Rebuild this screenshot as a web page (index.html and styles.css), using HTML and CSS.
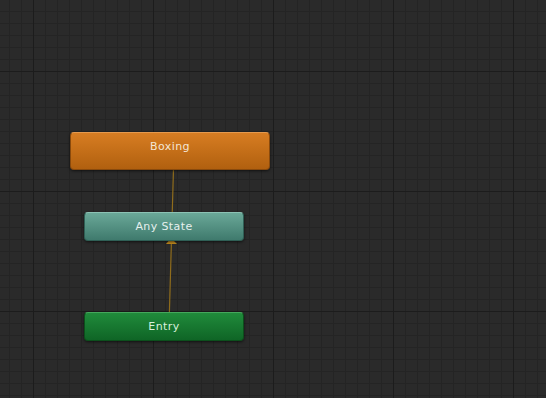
FILE: index.html
```html
<!DOCTYPE html>
<html lang="en">
<head>
  <meta charset="UTF-8" />
  <title>Animator</title>
  <link rel="stylesheet" href="styles.css">
</head>
<body>
  <div class="graph">
    <svg class="links" width="546" height="398">
      <line x1="169" y1="326" x2="174" y2="151" stroke="#8f6c1c" stroke-width="1.2" />
      <polygon points="171,238 166,244 177,244" fill="#c08a1e" />
    </svg>

    <div class="node state" style="left:70px; top:132px;">Boxing</div>
    <div class="node any" style="left:84px; top:212px;">Any State</div>
    <div class="node entry" style="left:84px; top:312px;">Entry</div>
  </div>
</body>
</html>
```

FILE: styles.css
```css
body {
  margin: 0;
  padding: 0;
  background: #282828;
  font-family: "DejaVu Sans", Verdana, sans-serif;
}
.graph {
  position: relative;
  width: 546px;
  height: 398px;
  overflow: hidden;
  background-color: #2a2a2a;
  background-image:
    linear-gradient(to right, #1c1c1c 1px, transparent 1px),
    linear-gradient(to bottom, #1c1c1c 1px, transparent 1px),
    linear-gradient(to right, #242424 1px, transparent 1px),
    linear-gradient(to bottom, #242424 1px, transparent 1px);
  background-size: 120px 120px, 120px 120px, 12px 12px, 12px 12px;
  background-position: 33px 0, 0 71px, 9px 0, 0 11px;
}
.links {
  position: absolute;
  left: 0;
  top: 0;
}
.node {
  position: absolute;
  box-sizing: border-box;
  border-radius: 4px;
  font-size: 11px;
  letter-spacing: 0.4px;
  text-align: center;
  box-shadow: 0 1px 3px rgba(0,0,0,0.6);
}
.state {
  width: 200px;
  height: 38px;
  padding-top: 7px;
  color: #f4e6d4;
  background: linear-gradient(#d77d22, #b1600f);
  border: 1px solid #8a4a0c;
  border-top-color: #e59a4e;
}
.any {
  width: 160px;
  height: 29px;
  line-height: 27px;
  color: #e6f0ee;
  background: linear-gradient(#6aa898, #3f7a6d);
  border: 1px solid #2f5f55;
  border-top-color: #8cc2b4;
}
.entry {
  width: 160px;
  height: 29px;
  line-height: 27px;
  color: #d8f0dc;
  background: linear-gradient(#208b3b, #0f6526);
  border: 1px solid #0c4f1c;
  border-top-color: #45a75c;
}
```
